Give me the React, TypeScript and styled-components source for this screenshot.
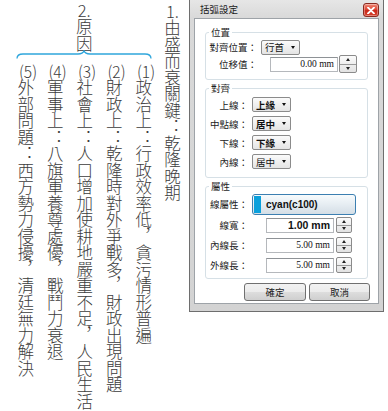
import React from 'react';
import styled, { createGlobalStyle } from 'styled-components';

const GlobalStyle = createGlobalStyle`
  html, body {
    margin: 0;
    padding: 0;
    background: #fff;
  }
  body {
    font-family: "Noto Sans CJK TC", "Noto Sans", sans-serif;
  }
`;

const Page = styled.div`
  display: flex;
  align-items: flex-start;
  width: 388px;
  height: 411px;
  overflow: hidden;
  background: #fff;
`;

/* ---------- left: vertical outline ---------- */

const Outline = styled.div`
  display: flex;
  align-items: flex-start;
  gap: 6px;
  width: 189px;
  box-sizing: border-box;
  padding: 2px 0 0 10px;
  color: #3c3c3c;
  font-size: 16.5px;
  font-weight: 300;
`;

const Vertical = styled.div`
  writing-mode: vertical-rl;
  white-space: nowrap;
  font-feature-settings: "vert" 0;
`;

const Heading = styled(Vertical)`
  line-height: 16.5px;
  margin-top: 1px;
`;

const Causes = styled.div`
  display: flex;
  flex-direction: column;
  align-items: center;
  width: 148px;
`;

const CauseTitle = styled(Vertical)`
  line-height: 16.5px;
`;

const Brace = styled.svg`
  display: block;
  margin-top: -2px;
`;

const CauseList = styled(Vertical)`
  height: 349px;
  margin-top: 4px;
  line-height: 29.5px;
`;

const Num = styled.span`
  text-combine-upright: all;
`;

/* ---------- right: dialog ---------- */

const Window = styled.div`
  display: flex;
  flex-direction: column;
  width: 195px;
  height: 312px;
  box-sizing: border-box;
  border: 1px solid #6e6e6e;
  border-top: 0;
  background: linear-gradient(#e6e6e6, #d9d9d9 18px, #d3d3d3);
`;

const TitleBar = styled.div`
  display: flex;
  align-items: center;
  justify-content: space-between;
  height: 18px;
  padding: 0 4px 0 10px;
  font-size: 9.5px;
  color: #1a1a1a;
`;

const CloseButton = styled.div`
  display: flex;
  align-items: center;
  justify-content: center;
  width: 16px;
  height: 14px;
  margin-top: 2px;
  box-sizing: border-box;
  border: 1px solid #8a2a20;
  border-radius: 3px;
  background: linear-gradient(#f08a78, #de4634 45%, #c9281a 55%, #d8432e);
  box-shadow: inset 0 0 0 1px rgba(255, 255, 255, 0.35);
`;

const Body = styled.div`
  flex: 1;
  display: flex;
  flex-direction: column;
  gap: 1px;
  margin: 0 4px 7px;
  padding: 6px 10px 0;
  background: #fff;
  border: 1px solid #9ea3a8;
`;

const Group = styled.fieldset<{ $pb: number }>`
  margin: 0;
  padding: 0 0 ${(p) => p.$pb}px;
  min-width: 0;
  border: 1px solid #d6e0e6;
  border-radius: 3px;
`;

const Legend = styled.legend`
  margin-left: 3px;
  padding: 0 2px;
  font-size: 9.5px;
  line-height: 14px;
  color: #1e1e1e;
`;

const Row = styled.div<{ $h: number }>`
  display: flex;
  align-items: center;
  height: ${(p) => p.$h}px;
`;

const Label = styled.span<{ $w: number }>`
  width: ${(p) => p.$w}px;
  text-align: right;
  font-size: 9.5px;
  color: #222;
  white-space: nowrap;
`;

const Select = styled.div<{ $bold?: boolean }>`
  display: flex;
  align-items: center;
  justify-content: space-between;
  box-sizing: border-box;
  width: 39px;
  height: 15px;
  margin-left: 4px;
  padding: 0 4px 0 3px;
  border: 1px solid #8b8b8b;
  border-radius: 2px;
  background: linear-gradient(#fbfbfb, #e4e4e4);
  font-size: 9.5px;
  font-weight: ${(p) => (p.$bold ? 700 : 400)};
  color: #111;
`;

const Caret = styled.span`
  width: 0;
  height: 0;
  border-left: 2.5px solid transparent;
  border-right: 2.5px solid transparent;
  border-top: 3px solid #111;
`;

const Field = styled.div<{ $w: number; $ml: number; $bold?: boolean }>`
  display: flex;
  align-items: center;
  justify-content: flex-end;
  box-sizing: border-box;
  width: ${(p) => p.$w}px;
  height: 15px;
  margin-left: ${(p) => p.$ml}px;
  padding-right: 3px;
  border: 1px solid #b5b8bc;
  border-top-color: #8e9296;
  background: #fff;
  color: #111;
  font-family: ${(p) => (p.$bold ? '"Liberation Sans", Arial, sans-serif' : '"Liberation Serif", serif')};
  font-size: ${(p) => (p.$bold ? 10.5 : 9.5)}px;
  font-weight: ${(p) => (p.$bold ? 700 : 400)};
`;

const Spin = styled.div<{ $size: number; $ml: number }>`
  display: flex;
  flex-direction: column;
  box-sizing: border-box;
  width: ${(p) => p.$size}px;
  height: ${(p) => p.$size}px;
  margin-left: ${(p) => p.$ml}px;
  border: 1px solid #8b8b8b;
  border-radius: 2px;
  background: linear-gradient(#fbfbfb, #e2e2e2);
`;

const SpinHalf = styled.div<{ $down?: boolean }>`
  flex: 1;
  display: flex;
  align-items: center;
  justify-content: center;
  border-top: ${(p) => (p.$down ? '1px solid #9a9a9a' : '0')};

  &::after {
    content: '';
    border-left: 2.5px solid transparent;
    border-right: 2.5px solid transparent;
    ${(p) => (p.$down ? 'border-top: 3px solid #222;' : 'border-bottom: 3px solid #222;')}
  }
`;

const ColorButton = styled.div`
  display: flex;
  align-items: center;
  box-sizing: border-box;
  width: 104px;
  height: 21px;
  margin-left: 4px;
  padding: 1px;
  border: 1px solid #3c7fb1;
  border-radius: 3px;
  background: linear-gradient(#f7fbfd, #e6edf2 50%, #d4dee6);
  font-family: "Liberation Sans", Arial, sans-serif;
  font-size: 10px;
  font-weight: 700;
  color: #111;
`;

const Swatch = styled.span<{ $c: string }>`
  align-self: stretch;
  width: 7px;
  margin-right: 5px;
  background: ${(p) => p.$c};
`;

const Buttons = styled.div`
  display: flex;
  justify-content: flex-end;
  gap: 3px;
  margin: 3px -2px 0 0;
`;

const Button = styled.button<{ $w: number }>`
  width: ${(p) => p.$w}px;
  height: 18px;
  padding: 0;
  border: 1px solid #707070;
  border-radius: 3px;
  background: linear-gradient(#f2f2f2 0%, #ebebeb 50%, #dddddd 51%, #cfcfcf 100%);
  font-family: "Noto Sans CJK TC", sans-serif;
  font-size: 9.5px;
  color: #222;
`;

const causes = [
  { n: '(1)', head: '政治上', text: '行政效率低，貪污情形普遍' },
  { n: '(2)', head: '財政上', text: '乾隆時對外爭戰多，財政出現問題' },
  { n: '(3)', head: '社會上', text: '人口增加使耕地嚴重不足，人民生活' },
  { n: '(4)', head: '軍事上', text: '八旗軍養尊處優，戰鬥力衰退' },
  { n: '(5)', head: '外部問題', text: '西方勢力侵擾，清廷無力解決' },
];

const aligns = [
  { label: '上線：', value: '上緣', bold: true },
  { label: '中點線：', value: '居中', bold: true },
  { label: '下線：', value: '下緣', bold: true },
  { label: '內線：', value: '居中', bold: false },
];

const lengths = [
  { label: '內線長：', value: '5.00 mm' },
  { label: '外線長：', value: '5.00 mm' },
];

export default function App() {
  return (
    <Page>
      <GlobalStyle />
      <Outline>
        <Causes>
          <CauseTitle>
            <Num>2.</Num>原因
          </CauseTitle>
          <Brace width="136" height="9" viewBox="0 0 136 9">
            <path
              d="M1 8.6 C1 5.2 3 4 7 4 L62 4 C66 4 67.4 2.6 68 0.8 C68.6 2.6 70 4 74 4 L129 4 C133 4 135 5.2 135 8.6"
              fill="none"
              stroke="#2fa6dc"
              strokeWidth="1.3"
            />
          </Brace>
          <CauseList>
            {causes.map((c) => (
              <div key={c.n}>
                <Num>{c.n}</Num>
                {c.head}：{c.text}
              </div>
            ))}
          </CauseList>
        </Causes>
        <Heading>
          <Num>1.</Num>由盛而衰關鍵：乾隆晚期
        </Heading>
      </Outline>

      <Window>
        <TitleBar>
          <span>括弧設定</span>
          <CloseButton>
            <svg width="8" height="7" viewBox="0 0 8 7">
              <path d="M1 0.5 L7 6.5 M7 0.5 L1 6.5" stroke="#fff" strokeWidth="1.8" strokeLinecap="round" />
            </svg>
          </CloseButton>
        </TitleBar>
        <Body>
          <Group $pb={6}>
            <Legend>位置</Legend>
            <Row $h={16}>
              <Label $w={51}>對齊位置：</Label>
              <Select>
                行首
                <Caret />
              </Select>
            </Row>
            <Row $h={18}>
              <Label $w={51}>位移值：</Label>
              <Field $w={68} $ml={13}>0.00 mm</Field>
              <Spin $size={18} $ml={1}>
                <SpinHalf />
                <SpinHalf $down />
              </Spin>
            </Row>
          </Group>

          <Group $pb={6}>
            <Legend>對齊</Legend>
            {aligns.map((a) => (
              <Row $h={19} key={a.label}>
                <Label $w={42}>{a.label}</Label>
                <Select $bold={a.bold}>
                  {a.value}
                  <Caret />
                </Select>
              </Row>
            ))}
          </Group>

          <Group $pb={3}>
            <Legend>屬性</Legend>
            <Row $h={22}>
              <Label $w={42}>線屬性：</Label>
              <ColorButton>
                <Swatch $c="#0aa0dc" />
                cyan(c100)
              </ColorButton>
            </Row>
            <Row $h={20}>
              <Label $w={42}>線寬：</Label>
              <Field $w={68} $ml={18} $bold>
                1.00 mm
              </Field>
              <Spin $size={16} $ml={2}>
                <SpinHalf />
                <SpinHalf $down />
              </Spin>
            </Row>
            {lengths.map((l) => (
              <Row $h={20} key={l.label}>
                <Label $w={42}>{l.label}</Label>
                <Field $w={68} $ml={18}>{l.value}</Field>
                <Spin $size={16} $ml={2}>
                  <SpinHalf />
                  <SpinHalf $down />
                </Spin>
              </Row>
            ))}
          </Group>

          <Buttons>
            <Button $w={62}>確定</Button>
            <Button $w={61}>取消</Button>
          </Buttons>
        </Body>
      </Window>
    </Page>
  );
}
